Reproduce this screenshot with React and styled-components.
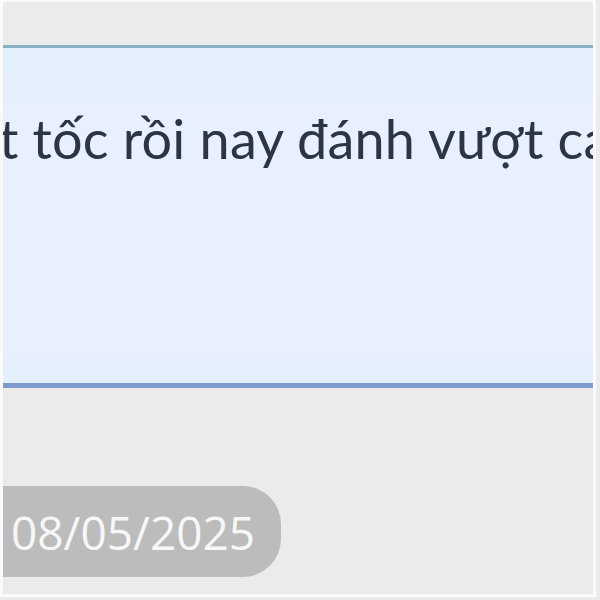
import styled, { createGlobalStyle } from "styled-components";

const Global = createGlobalStyle`
  html, body {
    margin: 0;
    padding: 0;
    background: #ebebeb;
  }
`;

const Frame = styled.div`
  width: 596px;
  height: 597px;
  box-sizing: border-box;
  border-left: 3px solid #fafafc;
  border-right: 3px solid #fafafc;
  border-top: 2px solid #fafafc;
  border-bottom: 3px solid #fafafc;
  background: #ebebeb;
  overflow: hidden;
  display: flex;
  flex-direction: column;
`;

const Bubble = styled.div`
  margin-top: 43px;
  height: 343px;
  box-sizing: border-box;
  background: linear-gradient(to bottom, #e2f0fb 0%, #e8effd 20%, #e8effd 90%, #e3f0fc 100%);
  border-top: 3px solid #8cb0c6;
  border-bottom: 5px solid #7f9bcd;
  overflow: hidden;
`;

const Message = styled.p`
  margin: 0;
  margin-left: -4px;
  padding-top: 60px;
  font-family: Lato, "Noto Sans", sans-serif;
  font-size: 54px;
  line-height: 62px;
  letter-spacing: 0.2px;
  color: #2b3545;
  white-space: nowrap;
`;

const DateRow = styled.div`
  margin-top: 98px;
  display: flex;
`;

const DatePill = styled.span`
  margin-left: -40px;
  padding: 0 26px 0 48px;
  height: 91px;
  display: flex;
  align-items: center;
  background: #bcbcbc;
  border-radius: 0 38px 38px 0;
  font-family: "Open Sans", "Noto Sans", sans-serif;
  font-size: 46px;
  color: #f7f7f7;
`;

export default function App() {
  return (
    <>
      <Global />
      <Frame>
        <Bubble>
          <Message>t tốc rồi nay đánh vượt ca</Message>
        </Bubble>
        <DateRow>
          <DatePill>08/05/2025</DatePill>
        </DateRow>
      </Frame>
    </>
  );
}
